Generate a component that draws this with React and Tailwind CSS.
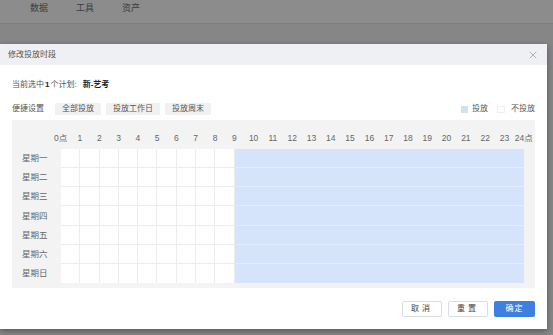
import { X } from "lucide-react";

const hours = Array.from({ length: 25 }, (_, i) =>
  i === 0 ? "0点" : i === 24 ? "24点" : String(i)
);
const days = ["星期一", "星期二", "星期三", "星期四", "星期五", "星期六", "星期日"];

// 0-8 点不投放，9-23 点投放
const isOn = (h) => h >= 9;

function Cell({ day, hour }) {
  const on = isOn(hour);
  const last = day === 6;
  return (
    <div
      className={
        on
          ? `bg-[#d5e4fb] ${last ? "" : "border-b border-[#e3edfd]"}`
          : `bg-white border-r border-[#ececec] ${last ? "" : "border-b"}`
      }
    />
  );
}

export default function App() {
  return (
    <div
      className="relative w-[553px] h-[335px] overflow-hidden bg-[#868686] text-[#333]"
      style={{ fontFamily: '"Liberation Sans", "Noto Sans CJK SC", sans-serif' }}
    >
      {/* 顶部导航（遮罩下） */}
      <div className="h-[24px] bg-[#8c8c8c] border-b border-[#7f7f7f] flex items-start pt-[2px] gap-[28px] pl-[30px] text-[9px] leading-[12px] text-[#3c3c3c]">
        <span>数据</span>
        <span>工具</span>
        <span>资产</span>
      </div>

      {/* 弹窗 */}
      <div className="absolute left-0 top-[44px] w-[547px] h-[285px] bg-white shadow-[0_2px_6px_rgba(0,0,0,0.35)] flex flex-col">
        <div className="h-[21px] shrink-0 bg-[#eef0f3] flex items-center justify-between pl-[8px] pr-[8px]">
          <span className="text-[8px] text-[#555]">修改投放时段</span>
          <X className="w-[12px] h-[12px] text-[#8a8a8a]" strokeWidth={1.2} />
        </div>

        <div className="px-[12px]">
          <div className="mt-[15px] h-[10px] flex items-center text-[8px] text-[#555]">
            当前选中<b className="text-[#222] mx-[1px]">1</b>个计划:
            <b className="ml-[6px] text-[#222] font-bold">新-艺考</b>
          </div>

          <div className="mt-[13px] h-[12px] flex items-center text-[8px] text-[#555]">
            <span className="mr-[11px]">便捷设置</span>
            <div className="flex gap-[5px]">
              <span className="h-[12px] px-[7px] flex items-center bg-[#f1f1f1] rounded-[1px]">全部投放</span>
              <span className="h-[12px] px-[7px] flex items-center bg-[#f1f1f1] rounded-[1px]">投放工作日</span>
              <span className="h-[12px] px-[7px] flex items-center bg-[#f1f1f1] rounded-[1px]">投放周末</span>
            </div>
            <div className="ml-auto flex items-center">
              <span className="w-[7px] h-[7px] bg-[#cfe3ef] mr-[4px]" />
              <span>投放</span>
              <span className="w-[8px] h-[7px] bg-white border border-[#f0f0f0] ml-[9px] mr-[6px]" />
              <span>不投放</span>
            </div>
          </div>

          {/* 时段表 */}
          <div className="mt-[5px] h-[168px] bg-[#f3f3f3] pt-[12px] text-[8.5px] text-[#666]">
            <div className="ml-[39px] grid grid-cols-[repeat(25,19.3px)] h-[10px] items-center">
              {hours.map((h) => (
                <span key={h} className="text-center whitespace-nowrap">
                  {h}
                </span>
              ))}
            </div>
            <div className="mt-[7px] flex">
              <div className="w-[49px] grid grid-rows-[repeat(7,1fr)] h-[134px]">
                {days.map((d) => (
                  <span key={d} className="flex items-center pl-[10px]">
                    {d}
                  </span>
                ))}
              </div>
              <div className="w-[463px] h-[134px] grid grid-cols-[repeat(24,1fr)] grid-rows-[repeat(7,1fr)]">
                {days.map((_, d) =>
                  Array.from({ length: 24 }, (_, h) => <Cell key={`${d}-${h}`} day={d} hour={h} />)
                )}
              </div>
            </div>
          </div>
        </div>

        <div className="mt-auto mb-[12px] pr-[12px] flex justify-end gap-[6px] text-[8px]">
          <button className="w-[40px] h-[16px] bg-white border border-[#dcdcdc] rounded-[2px] text-[#444] tracking-[3px]">
            取消
          </button>
          <button className="w-[40px] h-[16px] bg-white border border-[#dcdcdc] rounded-[2px] text-[#444] tracking-[3px]">
            重置
          </button>
          <button className="w-[41px] h-[16px] bg-[#3d80e0] rounded-[2px] text-white tracking-[1px]">
            确定
          </button>
        </div>
      </div>
    </div>
  );
}
